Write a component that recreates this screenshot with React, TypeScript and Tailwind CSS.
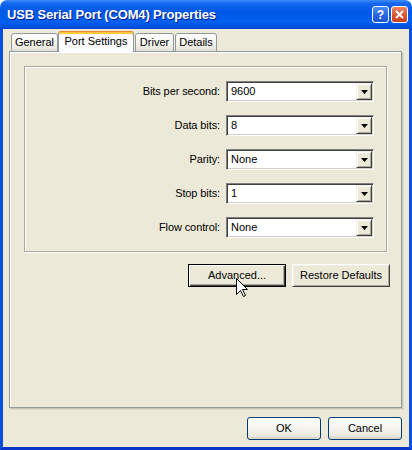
import React from "react";

type ComboProps = {
  label: string;
  value: string;
};

const DropButton = () => (
  <div className="ml-auto flex h-[17px] w-[16px] items-center justify-center border border-t-[#F1EFE2] border-l-[#F1EFE2] border-r-[#404040] border-b-[#404040] bg-[#ECE9D8] shadow-[inset_1px_1px_0_#fff,inset_-1px_-1px_0_#ACA899]">
    <svg width="7" height="4" viewBox="0 0 7 4">
      <path d="M0 0H7L3.5 4Z" fill="#000" />
    </svg>
  </div>
);

const Combo = ({ label, value }: ComboProps) => (
  <div className="flex h-[21px] items-center">
    <div className="w-[201px] pr-[6px] text-right tracking-[-0.1px]">{label}</div>
    <div className="flex h-[21px] w-[148px] items-center border border-t-[#808080] border-l-[#808080] border-r-white border-b-white bg-white p-[1px] shadow-[inset_1px_1px_0_#404040,inset_-1px_-1px_0_#D4D0C8]">
      <span className="pl-[3px] leading-none">{value}</span>
      <DropButton />
    </div>
  </div>
);

const Tab = ({ title, width }: { title: string; width: string }) => (
  <div
    className={`flex h-[19px] items-center justify-center rounded-t-[3px] border border-[#919B9C] bg-[linear-gradient(to_bottom,#FFFFFF,#F3F2EC_60%,#E3E1D8)] ${width}`}
  >
    {title}
  </div>
);

export default function App() {
  return (
    <div className="relative h-[450px] w-[412px] bg-white font-['Liberation_Sans',Arial,sans-serif] text-[11px] text-black">
      <div className="flex h-full flex-col overflow-hidden rounded-t-[7px]">
        {/* title bar */}
        <div className="flex h-[29px] shrink-0 items-center bg-[linear-gradient(to_bottom,#3C8CF8_0%,#1467F0_12%,#0058E6_40%,#0060F0_75%,#0054E0_90%,#0045D0_100%)] pl-[7px] pr-[4px]">
          <span className="text-[13px] font-bold tracking-[-0.15px] text-white [text-shadow:1px_1px_0_#0A1E8A]">
            USB Serial Port (COM4) Properties
          </span>
          <div className="ml-auto flex gap-[2px]">
            <div className="flex h-[17px] w-[17px] items-center justify-center rounded-[3px] border border-white bg-[linear-gradient(to_bottom,#4B8CF7,#2663E0_60%,#1D58D4)] text-[12px] font-bold text-white">
              ?
            </div>
            <div className="flex h-[17px] w-[17px] items-center justify-center rounded-[3px] border border-white bg-[linear-gradient(to_bottom,#E9876B,#D9512F_60%,#C8401F)]">
              <svg width="9" height="9" viewBox="0 0 9 9">
                <path d="M1 1L8 8M8 1L1 8" stroke="#fff" strokeWidth="2" />
              </svg>
            </div>
          </div>
        </div>

        {/* body */}
        <div className="flex flex-1 flex-col border-x-[3px] border-b-[3px] border-x-[#0B4FE0] border-b-[#0935C8] bg-[#ECE9D8] px-[6px] pt-[2px]">
          {/* tabs */}
          <div className="relative z-10 -mb-[1px] ml-[2px] flex h-[21px] items-end">
            <Tab title="General" width="w-[47px]" />
            <div className="flex h-[21px] w-[76px] items-center justify-center rounded-t-[3px] border border-b-0 border-[#919B9C] border-t-[#E68B2C] bg-[#FCFCFE] pb-[1px] shadow-[inset_0_2px_0_#FFC73C]">
              Port Settings
            </div>
            <div className="ml-[1px]">
              <Tab title="Driver" width="w-[39px]" />
            </div>
            <div className="ml-[1px]">
              <Tab title="Details" width="w-[42px]" />
            </div>
          </div>

          {/* panel */}
          <div className="h-[357px] w-[393px] border border-[#919B9C] pl-[14px] pt-[14px] shadow-[inset_1px_1px_0_#fff,1px_1px_0_#C9C7BA,2px_2px_0_#DEDBCB]">
            <div className="flex h-[186px] w-[363px] flex-col gap-[13px] border border-[#ACA899] pt-[14px] shadow-[inset_1px_1px_0_#fff,1px_1px_0_#fff]">
              <Combo label="Bits per second:" value="9600" />
              <Combo label="Data bits:" value="8" />
              <Combo label="Parity:" value="None" />
              <Combo label="Stop bits:" value="1" />
              <Combo label="Flow control:" value="None" />
            </div>

            <div className="mt-[12px] flex justify-end gap-[6px] pr-[11px]">
              <div className="flex h-[23px] w-[98px] items-center justify-center border border-black bg-[#ECE9D8] shadow-[inset_1px_1px_0_#fff,inset_-1px_-1px_0_#404040,inset_-2px_-2px_0_#ACA899]">
                Advanced...
              </div>
              <div className="flex h-[23px] w-[98px] items-center justify-center border border-t-white border-l-white border-r-[#404040] border-b-[#404040] bg-[#ECE9D8] shadow-[inset_1px_1px_0_#F1EFE2,inset_-1px_-1px_0_#ACA899]">
                Restore Defaults
              </div>
            </div>
          </div>

          {/* dialog buttons */}
          <div className="mt-[9px] flex justify-end gap-[7px] pr-[1px]">
            <div className="flex h-[23px] w-[74px] items-center justify-center rounded-[3px] border border-[#003C74] bg-[linear-gradient(to_bottom,#FFFFFF,#F5F4EF_50%,#E9E7DE_85%,#D6D0C5)]">
              OK
            </div>
            <div className="flex h-[23px] w-[74px] items-center justify-center rounded-[3px] border border-[#003C74] bg-[linear-gradient(to_bottom,#FFFFFF,#F5F4EF_50%,#E9E7DE_85%,#D6D0C5)]">
              Cancel
            </div>
          </div>
        </div>
      </div>

      {/* mouse pointer */}
      <svg
        className="absolute left-[236px] top-[278px]"
        width="12"
        height="20"
        viewBox="0 0 12 20"
      >
        <path
          d="M0.5 0.5V16.5L4.5 12.5L7.5 18.5L9.5 17.5L6.5 11.5H11.5Z"
          fill="#fff"
          stroke="#000"
          strokeWidth="1"
          strokeLinejoin="miter"
        />
      </svg>
    </div>
  );
}
